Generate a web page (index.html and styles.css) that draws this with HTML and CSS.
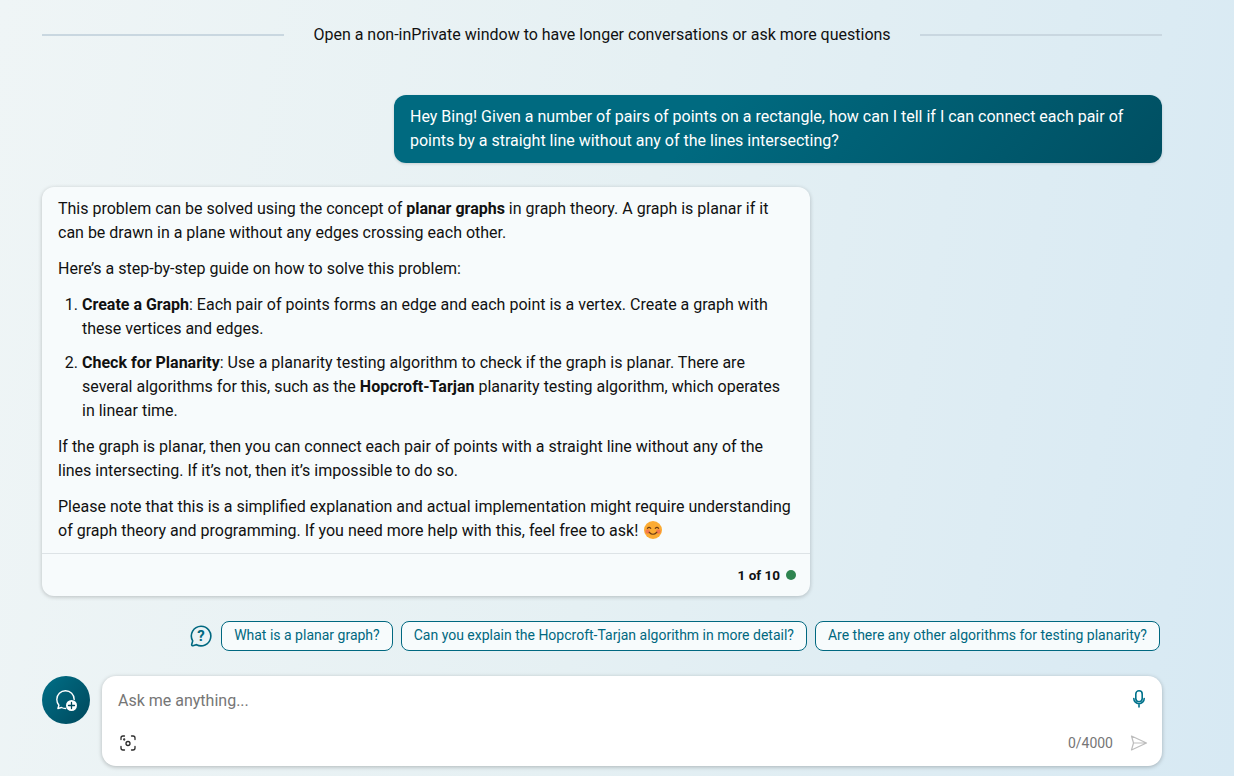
FILE: index.html
```html
<!DOCTYPE html>
<html lang="en">
<head>
  <meta charset="UTF-8" />
  <title>Chat</title>
  <link rel="stylesheet" href="styles.css">
</head>
<body>

  <div class="notice">
    <span class="notice-line"></span>
    <span class="notice-text">Open a non-inPrivate window to have longer conversations or ask more questions</span>
    <span class="notice-line"></span>
  </div>

  <div class="user-row">
    <div class="user-bubble">Hey Bing! Given a number of pairs of points on a rectangle, how can I tell if I can connect each pair of points by a straight line without any of the lines intersecting?</div>
  </div>

  <div class="bot-card">
    <div class="bot-body">
      <p>This problem can be solved using the concept of <b>planar graphs</b> in graph theory. A graph is planar if it can be drawn in a plane without any edges crossing each other.</p>
      <p>Here’s a step-by-step guide on how to solve this problem:</p>
      <ol>
        <li><b>Create a Graph</b>: Each pair of points forms an edge and each point is a vertex. Create a graph with these vertices and edges.</li>
        <li><b>Check for Planarity</b>: Use a planarity testing algorithm to check if the graph is planar. There are several algorithms for this, such as the <b>Hopcroft-Tarjan</b> planarity testing algorithm, which operates in linear time.</li>
      </ol>
      <p>If the graph is planar, then you can connect each pair of points with a straight line without any of the lines intersecting. If it’s not, then it’s impossible to do so.</p>
      <p>Please note that this is a simplified explanation and actual implementation might require understanding of graph theory and programming. If you need more help with this, feel free to ask!
        <svg class="emoji" viewBox="0 0 16 16" width="18" height="18">
          <circle cx="8" cy="8" r="8" fill="#fbab32"/>
          <circle cx="3.2" cy="9.4" r="2" fill="#f5794c"/>
          <circle cx="12.8" cy="9.4" r="2" fill="#f5794c"/>
          <path d="M3 6.600q1.500-1.800 3 0M10 6.600q1.500-1.800 3 0" fill="none" stroke="#6b3a14" stroke-width="1" stroke-linecap="round"/>
          <path d="M4.600 10q3.400 3.600 6.800 0" fill="none" stroke="#6b3a14" stroke-width="1" stroke-linecap="round"/>
        </svg>
      </p>
    </div>
    <div class="bot-footer">
      <span class="turn-count">1 of 10</span>
      <span class="turn-dot"></span>
    </div>
  </div>

  <div class="suggestions">
    <svg class="help-icon" viewBox="0 0 24 24" width="24" height="24" fill="none">
      <path d="M12 2.200a9.800 9.800 0 1 1-4.500 18.500l-3.600 1a1 1 0 0 1-1.200-1.200l1-3.600A9.800 9.800 0 0 1 12 2.200z" stroke="#006880" stroke-width="1.600"/>
      <text x="12" y="17.200" text-anchor="middle" class="help-mark">?</text>
    </svg>
    <button class="chip">What is a planar graph?</button>
    <button class="chip">Can you explain the Hopcroft-Tarjan algorithm in more detail?</button>
    <button class="chip">Are there any other algorithms for testing planarity?</button>
  </div>

  <div class="composer">
    <button class="new-topic">
      <svg viewBox="0 0 24 24" width="24" height="24" fill="none">
        <path d="M20.200 11.500A8.700 8.700 0 1 0 2.800 11.500c0 2.200.8 4.200 2.100 5.700l-1 3.300 3.600-1c1.300.7 2.700 1 4.100 1" stroke="#fff" stroke-width="1.400" stroke-linecap="round" stroke-linejoin="round"/>
        <circle cx="17.500" cy="17.500" r="5.500" fill="#fff"/>
        <path d="M17.500 14.500v6M14.500 17.500h6" stroke="#00485c" stroke-width="1.300" stroke-linecap="round"/>
      </svg>
    </button>
    <div class="input-box">
      <div class="input-top">
        <span class="placeholder">Ask me anything...</span>
        <svg viewBox="0 0 20 20" width="20" height="20" fill="none" stroke="#00728c" stroke-width="1.600" stroke-linecap="round">
          <rect x="6.800" y="1.800" width="6.400" height="11" rx="3.200"/>
          <path d="M4.800 9.500a5.200 5.200 0 0 0 10.400 0M10 14.800V18"/>
        </svg>
      </div>
      <div class="input-bottom">
        <svg viewBox="0 0 20 20" width="20" height="20" fill="none" stroke="#2b2b2b" stroke-width="1.300" stroke-linecap="round">
          <path d="M3 6.500V5a2 2 0 0 1 2-2h1.500M13.500 3H15a2 2 0 0 1 2 2v1.500M17 13.500V15a2 2 0 0 1-2 2h-1.500M6.500 17H5a2 2 0 0 1-2-2v-1.500"/>
          <circle cx="10" cy="10.500" r="2"/>
          <circle cx="6.200" cy="6.500" r=".5"/>
        </svg>
        <div class="input-right">
          <span class="char-count">0/4000</span>
          <svg viewBox="0 0 20 20" width="20" height="20" fill="none" stroke="#bdbdbd" stroke-width="1.200" stroke-linejoin="round">
            <path d="M2.500 3l15 7-15 7 2-7zM4.500 10h13"/>
          </svg>
        </div>
      </div>
    </div>
  </div>

</body>
</html>
```

FILE: styles.css
```css
* {
  margin: 0; padding: 0; box-sizing: border-box;
  font-family: 'Roboto', 'Liberation Sans', sans-serif;
}
html, body { height: 100%; }

body {
  width: 1234px; height: 776px;
  padding: 0 72px 0 42px;
  overflow: hidden;
  font-size: 16px; line-height: 24px;
  color: #111;
  background: linear-gradient(100deg, #eff5f6 0%, #e5f0f3 50%, #d7e9f3 100%);
}

.notice {
  display: flex; align-items: center;
  height: 24px; margin-top: 23px;
}
.notice-line { flex: 1; height: 2px; background: #c9d7e0; }
.notice-text { padding: 0 29px; }

.user-row { display: flex; justify-content: flex-end; margin-top: 48px; }
.user-bubble {
  width: 768px;
  padding: 10px 16px;
  color: #fff;
  border-radius: 12px;
  background: linear-gradient(130deg, #006a80 0%, #006a80 40%, #004f62 100%);
  box-shadow: 0 1px 3px rgba(0,0,0,0.15);
}

.bot-card {
  width: 768px; margin-top: 24px;
  background: #f7fbfc;
  border-radius: 12px;
  box-shadow: 0 1px 4px rgba(0,0,0,0.22);
}
.bot-body { padding: 10px 16px; }
.bot-body p { margin-bottom: 12px; }
.bot-body p:last-child { margin-bottom: 0; }
.bot-body ol { margin-bottom: 12px; padding-left: 24px; }
.bot-body li { margin-bottom: 10px; }
.bot-body li:last-child { margin-bottom: 0; }
.bot-body b { font-weight: 700; }
.emoji { vertical-align: -3px; margin-left: 2px; }

.bot-footer {
  display: flex; align-items: center; justify-content: flex-end;
  gap: 6px;
  height: 43px; padding: 0 14px;
  border-top: 1px solid #dde3e6;
}
.turn-count { font-size: 13.5px; font-weight: 700; }
.turn-dot { width: 10px; height: 10px; border-radius: 50%; background: #2e8450; }

.suggestions {
  display: flex; justify-content: flex-end; align-items: center;
  gap: 8px;
  margin-top: 25px; padding-right: 2px;
}
.help-mark { font-size: 15px; font-weight: 700; fill: #006880; }
.chip {
  height: 30px; padding: 0 12px 2px;
  font-size: 14px; line-height: 20px;
  color: #006880;
  background: #f7fbfc;
  border: 1px solid #006880;
  border-radius: 8px;
}

.composer { display: flex; gap: 12px; margin-top: 25px; }
.new-topic {
  display: flex; align-items: center; justify-content: center;
  flex: none;
  width: 48px; height: 48px;
  border: none; border-radius: 50%;
  background: linear-gradient(130deg, #006f87, #00485c);
}
.input-box {
  flex: 1; height: 90px;
  padding: 13px 13px 0 16px;
  background: #fff;
  border-radius: 14px;
  box-shadow: 0 1px 4px rgba(0,0,0,0.25);
}
.input-top { display: flex; align-items: flex-start; justify-content: space-between; height: 24px; }
.placeholder { color: #767676; }
.input-bottom {
  display: flex; align-items: center; justify-content: space-between;
  margin-top: 18px;
}
.input-right { display: flex; align-items: center; gap: 16px; }
.char-count { font-size: 14px; color: #767676; }
```
